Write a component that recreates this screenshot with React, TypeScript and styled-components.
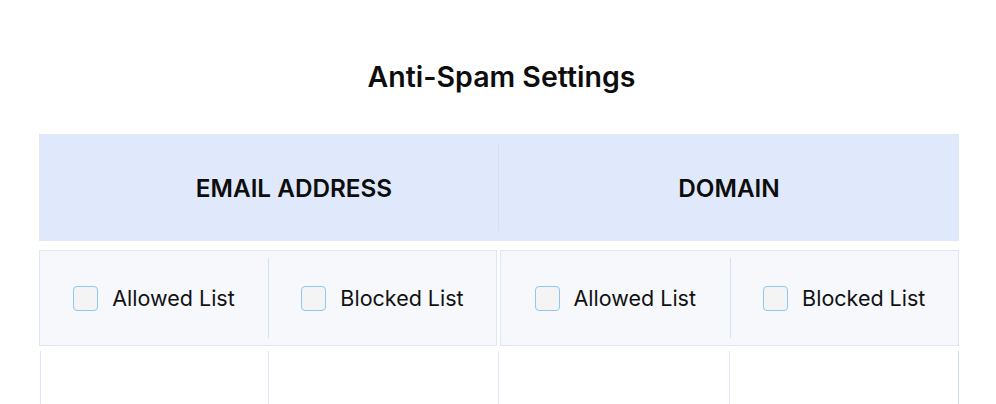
import styled, { createGlobalStyle } from "styled-components";

const GlobalStyle = createGlobalStyle`
    body {
        margin: 0;
        background: #ffffff;
        font-family: Inter, "Noto Sans", "Liberation Sans", sans-serif;
        color: #0d0d0d;
    }
`;

const Page = styled.div`
    width: 996px;
    height: 404px;
    overflow: hidden;
    padding: 0 37px 0 39px;
    box-sizing: border-box;
`;

const Title = styled.h1`
    margin: 0;
    padding: 60px 0 0 5px;
    height: 34px;
    line-height: 34px;
    text-align: center;
    font-size: 28.5px;
    font-weight: 600;
    color: #0d0d0d;
`;

const HeaderRow = styled.div`
    margin-top: 40px;
    height: 107px;
    padding: 10px 0;
    box-sizing: border-box;
    background: #e0e9fb;
    display: grid;
    grid-template-columns: 459px 1fr;
`;

const HeaderCell = styled.div<{ $divider?: boolean; $shift?: number }>`
    display: flex;
    align-items: center;
    justify-content: center;
    padding-left: ${(p) => p.$shift ?? 0}px;
    border-left: ${(p) => (p.$divider ? "1px solid #d5e0f5" : "none")};
    font-size: 24.3px;
    font-weight: 600;
    color: #0d0d0d;
`;

const OptionsRow = styled.div`
    margin-top: 9px;
    display: grid;
    grid-template-columns: 458px 459px;
    gap: 3px;
`;

const Group = styled.div`
    height: 96px;
    box-sizing: border-box;
    padding: 7px 0;
    background: #f6f8fc;
    border: 1px solid #dbe6f8;
    display: grid;
    grid-template-columns: 1fr 1fr;
`;

const OptionCell = styled.label<{ $divider?: boolean }>`
    display: flex;
    align-items: center;
    justify-content: center;
    gap: 14px;
    border-left: ${(p) => (p.$divider ? "1px solid #d3e1f6" : "none")};
    font-size: 21.5px;
    font-weight: 400;
    color: #111111;
`;

const Checkbox = styled.span`
    width: 25px;
    height: 25px;
    box-sizing: border-box;
    border: 1px solid #8ec8f2;
    border-radius: 4px;
    background: #f4f4f5;
    flex-shrink: 0;
`;

const EmptyRow = styled.div`
    margin: 5px 0 0 1px;
    height: 60px;
    display: grid;
    grid-template-columns: 228px 230px 231px 1fr;
`;

const EmptyCell = styled.div<{ $last?: boolean }>`
    border-left: 1px solid #dce6f8;
    border-right: ${(p) => (p.$last ? "1px solid #c9dcf5" : "none")};
`;

const Option = ({ label, divider }: { label: string; divider?: boolean }) => (
    <OptionCell $divider={divider}>
        <Checkbox />
        <span>{label}</span>
    </OptionCell>
);

export default function App() {
    return (
        <Page>
            <GlobalStyle />
            <Title>Anti-Spam Settings</Title>

            <HeaderRow>
                <HeaderCell $shift={51}>EMAIL ADDRESS</HeaderCell>
                <HeaderCell $divider>DOMAIN</HeaderCell>
            </HeaderRow>

            <OptionsRow>
                <Group>
                    <Option label="Allowed List" />
                    <Option label="Blocked List" divider />
                </Group>
                <Group>
                    <Option label="Allowed List" />
                    <Option label="Blocked List" divider />
                </Group>
            </OptionsRow>

            <EmptyRow>
                <EmptyCell />
                <EmptyCell />
                <EmptyCell />
                <EmptyCell $last />
            </EmptyRow>
        </Page>
    );
}
